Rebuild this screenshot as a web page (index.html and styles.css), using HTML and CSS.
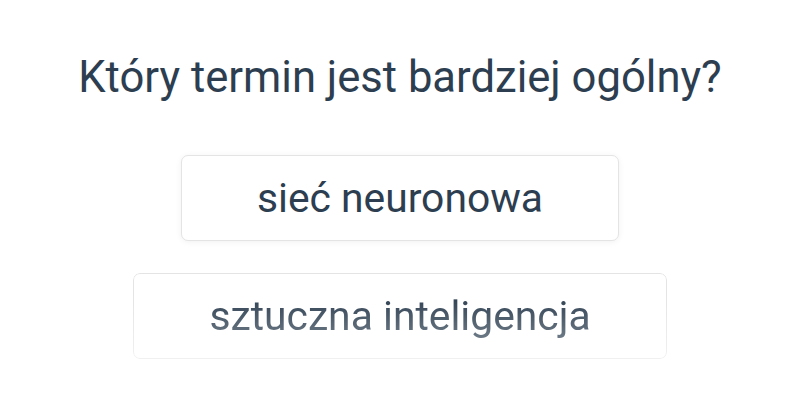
FILE: index.html
```html
<!DOCTYPE html>
<html lang="pl">
<head>
    <meta charset="UTF-8">
    <meta name="viewport" content="width=device-width, initial-scale=1.0">
    <title>Quiz</title>
    <link rel="stylesheet" href="styles.css">
</head>
<body>

    <div class="quiz">
        <h2 class="question">Który termin jest bardziej ogólny?</h2>

        <!-- odpowiedzi -->
        <div class="answers">
            <button class="answer">sieć neuronowa</button>
            <button class="answer answer-fade">sztuczna inteligencja</button>
        </div>
    </div>

</body>
</html>
```

FILE: styles.css
```css
body {
    font-family: 'Roboto', sans-serif;
    background-color: #fff;
    color: #2c3e50;
    margin: 0;
}

.quiz {
    text-align: center;
    padding-top: 48px;
}

.question {
    font-size: 43.6px;
    font-weight: 400;
    margin: 0 0 47px 0;
    line-height: 60px;
}

.answers {
    display: flex;
    flex-direction: column;
    align-items: center;
    gap: 32px;
}

.answer {
    font-family: 'Roboto', sans-serif;
    font-size: 40.8px;
    color: #2c3e50;
    background-color: #fff;
    border: 1px solid #e4e4e4;
    border-radius: 7px;
    padding: 0 75px;
    height: 86px;
    box-shadow: 0 1px 6px rgba(0, 0, 0, 0.06);
    cursor: pointer;
}

/* druga odpowiedź pojawia się z zanikaniem u dołu */
.answer-fade {
    -webkit-mask-image: linear-gradient(to bottom, #000 25%, rgba(0, 0, 0, 0.55) 100%);
    mask-image: linear-gradient(to bottom, #000 25%, rgba(0, 0, 0, 0.55) 100%);
}
```
